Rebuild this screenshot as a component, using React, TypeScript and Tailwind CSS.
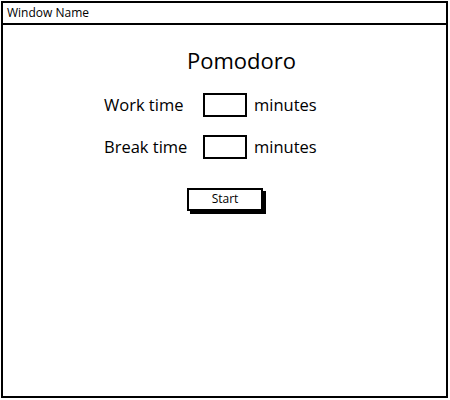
export default function App() {
  const font = { fontFamily: '"Open Sans", "Noto Sans", sans-serif' };
  return (
    <div className="w-[450px] h-[400px] bg-white p-px" style={font}>
      <div className="w-[447px] h-[397px] border-2 border-black flex flex-col bg-white">
        <div className="h-[22px] border-b-2 border-black flex items-center px-[4px] text-[12px] text-black leading-none">
          Window Name
        </div>
        <div className="flex-1 flex flex-col">
          <div className="mt-[20px] pl-[184px] text-[22px] leading-[30px] text-black">Pomodoro</div>
          <div className="mt-[18px] pl-[101px] flex flex-col gap-[18px]">
            <Row label="Work time" />
            <Row label="Break time" />
          </div>
          <div className="mt-[26px] pl-[184px]">
            <button className="w-[76px] h-[23px] border-2 border-black bg-white text-[12px] leading-none text-black shadow-[3px_3px_0_#000]">
              Start
            </button>
          </div>
        </div>
      </div>
    </div>
  );
}

function Row({ label }: { label: string }) {
  return (
    <div className="flex items-center h-[24px] text-[16.5px] text-black">
      <span className="w-[99px]">{label}</span>
      <div className="w-[44px] h-[24px] border-2 border-black" />
      <span className="ml-[7px]">minutes</span>
    </div>
  );
}
